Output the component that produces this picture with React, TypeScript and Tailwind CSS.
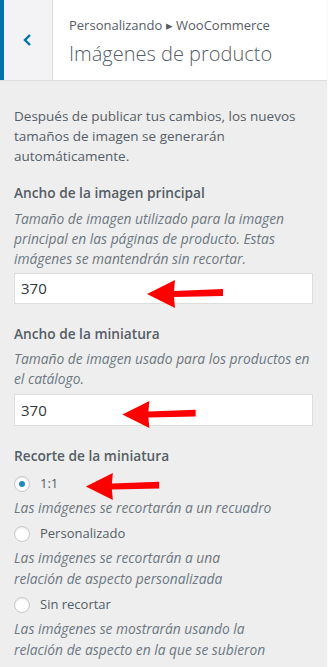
const Arrow = ({ className }: { className: string }) => (
  <svg className={`absolute ${className}`} viewBox="0 0 76 28" fill="#f00">
    <polygon points="0,14 28,0 27,11 76,9 76,16 27,17 28,28" />
  </svg>
);

const Radio = ({ checked, label, desc }: { checked?: boolean; label: string; desc: string[] }) => (
  <div className="mb-[4px]">
    <label className="flex items-center h-[24px]">
      <span className="w-[16px] h-[16px] rounded-full border border-[#c8c8c8] bg-white shadow-[inset_0_1px_2px_rgba(0,0,0,0.1)] flex items-center justify-center mr-[10px]">
        {checked && <span className="w-[6px] h-[6px] rounded-full bg-[#1e8cbe]" />}
      </span>
      <span className="text-[13px] text-[#555d66]">{label}</span>
    </label>
    <p className="mt-[1px] italic text-[13.8px] leading-[21px] text-[#6c7781]">
      {desc.map((d, i) => (
        <span key={i} className="block">{d}</span>
      ))}
    </p>
  </div>
);

export default function App() {
  return (
    <div className="relative w-[328px] h-[667px] overflow-hidden bg-[#eeeeee] border-r border-[#fafafa] font-['Open_Sans','Noto_Sans',sans-serif]">
      <div className="flex h-[81px] bg-white border-b border-[#dddddd]">
        <div className="w-[53px] bg-[#f3f3f5] border-l-[4px] border-[#0073aa] border-r border-r-[#dddddd] flex items-center justify-center">
          <svg width="14" height="14" viewBox="0 0 14 14" fill="none" stroke="#0073aa" strokeWidth="2.4">
            <path d="M9 2 L4 7 L9 12" />
          </svg>
        </div>
        <div className="pl-[16px] pt-[16px]">
          <div className="text-[13px] leading-[18px] text-[#555d66]">Personalizando ▸ WooCommerce</div>
          <div className="text-[20px] leading-[30px] font-light text-[#555d66] mt-[5px]">Imágenes de producto</div>
        </div>
      </div>

      <div className="px-[14px] pt-[25px]">
        <p className="text-[13.5px] leading-[20px] text-[#555d66]">
          Después de publicar tus cambios, los nuevos tamaños de imagen se generarán automáticamente.
        </p>

        <h3 className="mt-[17px] text-[13.7px] leading-[20px] font-semibold text-[#555d66]">Ancho de la imagen principal</h3>
        <p className="mt-[6px] italic text-[13.8px] leading-[20px] text-[#6c7781]">
          Tamaño de imagen utilizado para la imagen principal en las páginas de producto. Estas imágenes se mantendrán sin recortar.
        </p>
        <div className="mt-[4px] h-[31px] bg-white border border-[#dddddd] flex items-center px-[6px] text-[15px] text-[#32373c]">370</div>

        <h3 className="mt-[20px] text-[13.7px] leading-[20px] font-semibold text-[#555d66]">Ancho de la miniatura</h3>
        <p className="mt-[5px] italic text-[13.8px] leading-[20px] text-[#6c7781]">
          Tamaño de imagen usado para los productos en el catálogo.
        </p>
        <div className="mt-[5px] h-[32px] bg-white border border-[#dddddd] flex items-center px-[6px] text-[15px] text-[#32373c]">370</div>

        <h3 className="mt-[20px] text-[13.7px] leading-[20px] font-semibold text-[#555d66]">Recorte de la miniatura</h3>
        <div className="mt-[6px]">
          <Radio checked label="1:1" desc={["Las imágenes se recortarán a un recuadro"]} />
          <Radio label="Personalizado" desc={["Las imágenes se recortarán a una", "relación de aspecto personalizada"]} />
          <Radio label="Sin recortar" desc={["Las imágenes se mostrarán usando la", "relación de aspecto en la que se subieron"]} />
        </div>
      </div>

      <Arrow className="left-[147px] top-[280px] w-[76px] h-[28px]" />
      <Arrow className="left-[116px] top-[401px] w-[86px] h-[27px]" />
      <Arrow className="left-[80px] top-[473px] w-[85px] h-[27px]" />
    </div>
  );
}
